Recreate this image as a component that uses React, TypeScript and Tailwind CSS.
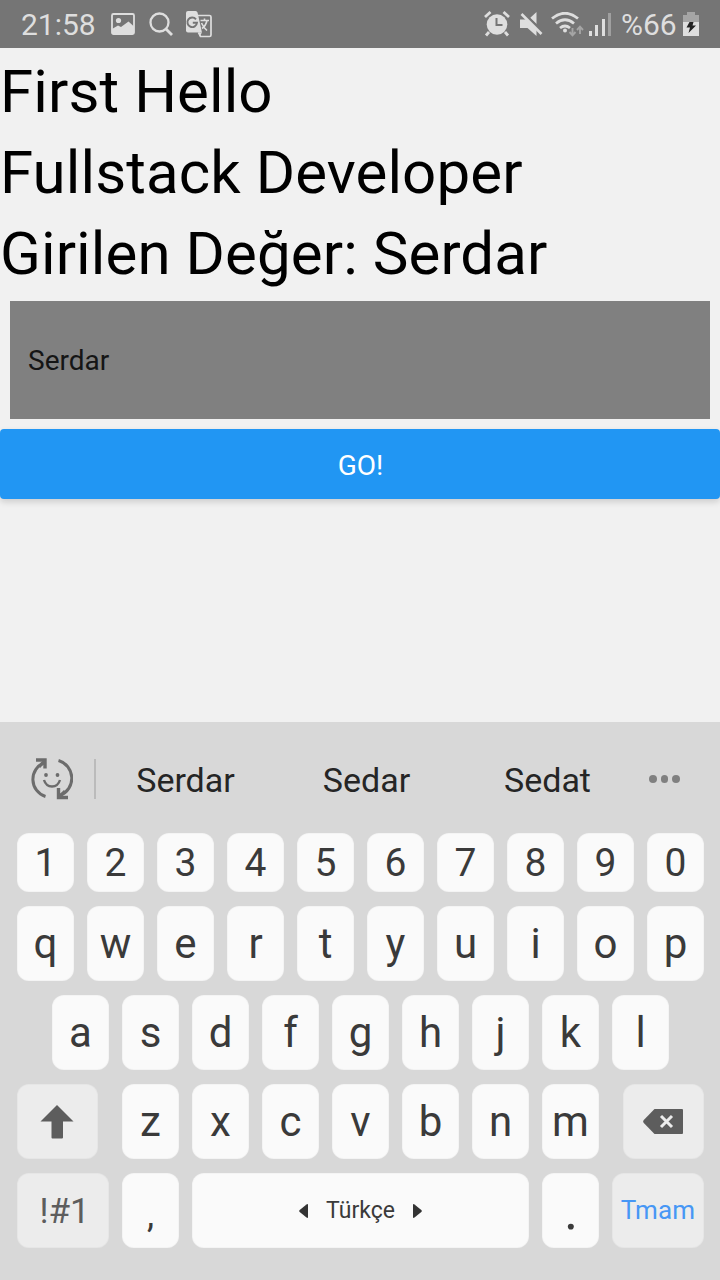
import React, { useState } from "react";

const keyBase = "flex items-center justify-center rounded-[12px] shadow-[inset_0_0_0_1px_rgba(0,0,0,0.025)]";

function Key({ label, tall = true }: { label: string; tall?: boolean }) {
  return (
    <button
      className={
        tall
          ? `${keyBase} h-[75px] w-[57px] bg-[#fafafa] pt-px text-[42px] leading-none text-[#3a3a3a]`
          : `${keyBase} h-[59px] w-[57px] bg-[#fafafa] pt-[2px] text-[39px] leading-none text-[#3a3a3a]`
      }
    >
      {label}
    </button>
  );
}

function StatusBar() {
  return (
    <header className="flex h-12 items-center bg-[#757575] text-[30px] leading-none text-[#dedede]">
      <span className="ml-[21px] w-[90px] pt-[2px]">21:58</span>
      <svg className="h-6 w-6" viewBox="0 0 24 24" fill="none">
        <rect x="1" y="2" width="22" height="20" rx="1.5" stroke="#dedede" strokeWidth="1.8" />
        <circle cx="7.5" cy="8.5" r="2.6" fill="#dedede" />
        <path d="M1 17l6-3.500 3 1.500 7.500-5.500 5.500 5v7.500H1z" fill="#dedede" />
      </svg>
      <svg className="ml-[14px] h-6 w-6" viewBox="0 0 24 24" fill="none" stroke="#dedede">
        <circle cx="10.5" cy="10.5" r="9" strokeWidth="2.3" />
        <path d="M17 17l6 6" strokeWidth="2.8" />
      </svg>
      <svg className="ml-[12px] h-[28px] w-[28px]" viewBox="0 0 28 28" fill="none">
        <path d="M13 5.500h11.500q1.500 0 1.500 1.500v18q0 1.500-1.500 1.500H15.500l-2-4" stroke="#dedede" strokeWidth="1.7" />
        <path d="M3 1h7.500q1.700 0 2.100 1.700L17 22.500H3q-2 0-2-2V3q0-2 2-2z" fill="#dedede" />
        <path d="M13.500 22.500h3.500l-2.500 4z" fill="#dedede" />
        <path d="M11 9.300A4.800 4.800 0 1 0 12 12.700H7.800" stroke="#757575" strokeWidth="1.9" />
        <path d="M15.500 10.500h8.500M19.500 8.500v2M16.500 13q2 4.500 5.500 7.500M22 10.500q-1 5-5 8" stroke="#dedede" strokeWidth="1.6" />
      </svg>
      <div className="ml-auto flex items-center">
        <svg className="h-[26px] w-[26px]" viewBox="0 0 26 26" fill="none">
          <path d="M5 21l-3 3.500M21 21l3 3.500M1 6l5.500-5M19.500 1l5.500 5" stroke="#dedede" strokeWidth="2.8" />
          <circle cx="13" cy="13.5" r="10.3" fill="#dedede" />
          <path d="M12.500 7v7h6" stroke="#757575" strokeWidth="2" />
        </svg>
        <svg className="ml-[10px] h-[26px] w-[23px]" viewBox="0 0 23 26" fill="none">
          <path d="M0 8.500h6l10.500 10v6.500L7.500 17H0zM10 7l6.500-6v12z" fill="#dedede" />
          <path d="M4 2l18.500 18.500" stroke="#757575" strokeWidth="2.2" />
          <path d="M1.500 3l20 20" stroke="#dedede" strokeWidth="2.6" />
        </svg>
        <svg className="ml-[8px] h-[25px] w-[33px]" viewBox="0 0 33 25" fill="none">
          <path d="M1 6.500q13-10.500 26 0M5 11.500q9-7.500 18 0M9 16q5-4 10 0" stroke="#dedede" strokeWidth="2.8" />
          <circle cx="14" cy="18.500" r="2" fill="#dedede" />
          <path d="M21.500 16v7M18.500 20l3 3.300 3-3.300M29 22v-7M26 18l3-3.300 3 3.300" stroke="#a5a5a5" strokeWidth="1.9" />
        </svg>
        <svg className="ml-[5px] h-[24px] w-[22px]" viewBox="0 0 22 24">
          <path d="M0 19h3v5H0zM6 13h3v11H6zM13 7h3v17h-3z" fill="#dedede" />
          <path d="M19 1h3v23h-3z" fill="#a0a0a0" />
        </svg>
        <span className="ml-[10px] w-[55px] whitespace-nowrap pt-[2px]">%66</span>
        <svg className="ml-[7px] mr-[21px] h-[24px] w-[16px]" viewBox="0 0 16 24">
          <path d="M4 0h8v3h4v7H0V3h4z" fill="#a5a5a5" />
          <path d="M0 10h16v14H0z" fill="#dedede" />
          <path d="M6.500 10h4l-1 3.500H13L5.500 21l1.500-5.500H3.500z" fill="#222" />
        </svg>
      </div>
    </header>
  );
}

function Suggestions() {
  return (
    <div className="flex h-[114px] items-center text-[34px] leading-none text-[#252525]">
      <svg className="ml-[31px] h-[42px] w-[42px]" viewBox="0 0 42 42" fill="none" stroke="#6c6c6c" strokeWidth="3">
        <path d="M14.500 38.500A18 18 0 0 1 13.500 4.500M27.500 2.500A18.500 18.500 0 0 1 29 37.500" />
        <path d="M5 2h9v8.500M37 39.500h-9.500v-9.500" strokeWidth="3.400" />
        <path d="M8 9l6-6.500M34 33l-6 6" />
        <path d="M13 22q2 6.500 8 6.500t8-6.500" strokeWidth="2.400" />
        <circle cx="15" cy="17" r="1.900" fill="#6c6c6c" stroke="none" />
        <circle cx="26.500" cy="17" r="1.900" fill="#6c6c6c" stroke="none" />
      </svg>
      <span className="ml-[21px] h-10 w-[2px] bg-[#bbb]" />
      <span className="w-[179px] pt-[2px] text-center">Serdar</span>
      <span className="w-[183px] pt-[2px] text-center">Sedar</span>
      <span className="w-[179px] pt-[2px] text-center">Sedat</span>
      <span className="ml-[12px] flex gap-[4px]">
        <i className="size-[7.500px] rounded-full bg-[#808080]" />
        <i className="size-[7.500px] rounded-full bg-[#808080]" />
        <i className="size-[7.500px] rounded-full bg-[#808080]" />
      </span>
    </div>
  );
}

function Keyboard() {
  return (
    <section className="flex h-[558px] flex-col bg-[#d8d8d8]">
      <Suggestions />
      <div className="-mt-[3px] flex flex-col gap-[14px] pl-[17px] pr-[16px]">
        <div className="flex gap-[13px]">
          {[..."1234567890"].map((c) => <Key key={c} label={c} tall={false} />)}
        </div>
        <div className="flex gap-[13px]">
          {[..."qwertyuiop"].map((c) => <Key key={c} label={c} />)}
        </div>
        <div className="flex gap-[13px] pl-[35px]">
          {[..."asdfghjkl"].map((c) => <Key key={c} label={c} />)}
        </div>
        <div className="flex justify-between">
          <button aria-label="Shift" className={`${keyBase} h-[75px] w-[81px] bg-[#ececec] pr-px`}>
            <svg className="h-[34px] w-[34px]" viewBox="0 0 34 34">
              <path d="M17 0L33.500 16.500H23V32.500q0 1-1 1h-9.500q-1 0-1-1V16.500H.5z" fill="#5d5d5d" />
            </svg>
          </button>
          <div className="flex gap-[13px]">
            {[..."zxcvbnm"].map((c) => <Key key={c} label={c} />)}
          </div>
          <button aria-label="Backspace" className={`${keyBase} h-[75px] w-[81px] bg-[#ececec] pr-[2px]`}>
            <svg className="h-[25px] w-[40px]" viewBox="0 0 40 25">
              <path d="M11.500 0H39q1 0 1 1v23q0 1-1 1H11.500L.8 14Q-.5 12.500.8 11z" fill="#5d5d5d" />
              <path d="M18 7l11 11M29 7L18 18" stroke="#ececec" strokeWidth="3" />
            </svg>
          </button>
        </div>
        <div className="flex gap-[13px]">
          <button className={`${keyBase} h-[75px] w-[92px] bg-[#ececec] pl-[3px] pt-px text-[35px] leading-none text-[#5d5d5d]`}>!#1</button>
          <button className={`${keyBase} h-[75px] w-[57px] bg-[#fafafa] pt-[8px] text-[36px] leading-none text-[#3a3a3a]`}>,</button>
          <button className={`${keyBase} h-[75px] w-[337px] bg-[#fafafa] pr-px text-[23px] leading-none text-[#3a3a3a]`}>
            <svg className="h-[14px] w-[9px]" viewBox="0 0 9 14">
              <path d="M9 1v12q0 1.500-1.500.5L.7 8Q-.3 7 .7 6L7.500.5Q9-.5 9 1z" fill="#333" />
            </svg>
            <span className="w-[105px] pl-px text-center">Türkçe</span>
            <svg className="h-[14px] w-[9px]" viewBox="0 0 9 14">
              <path d="M0 1v12q0 1.500 1.500.5L8.300 8q1-1 0-2L1.500.5Q0-.5 0 1z" fill="#333" />
            </svg>
          </button>
          <button className={`${keyBase} h-[75px] w-[57px] bg-[#fafafa] pl-px text-[54px] leading-none text-[#3a3a3a]`}>.</button>
          <button className={`${keyBase} h-[75px] w-[92px] bg-[#ececec] pb-px text-[26px] leading-none tracking-[0.2px] text-[#4797f5]`}>Tmam</button>
        </div>
      </div>
    </section>
  );
}

export default function App() {
  const [value, setValue] = useState("Serdar");
  return (
    <div className="flex h-[1280px] w-[720px] flex-col overflow-hidden bg-[#f1f1f1] font-['Roboto',sans-serif]">
      <StatusBar />
      <main className="flex flex-1 flex-col">
        <div className="h-[243px] pt-[3px] text-[60px] leading-[81px] tracking-[0.1px] text-black">
          <p>First Hello</p>
          <p>Fullstack Developer</p>
          <p className="whitespace-nowrap">Girilen Değer: {value}</p>
        </div>
        <input
          value={value}
          onChange={(e) => setValue(e.target.value)}
          className="mx-[10px] mt-[10px] h-[118px] bg-[#808080] px-[18px] pt-px text-[28px] text-[#151515] outline-none"
        />
        <button className="mt-[10px] h-[70px] rounded-[4px] bg-[#2196f3] pl-px pt-[3px] text-[28px] leading-none text-white shadow-[0_3px_6px_rgba(0,0,0,0.15)]">
          GO!
        </button>
      </main>
      <Keyboard />
    </div>
  );
}
